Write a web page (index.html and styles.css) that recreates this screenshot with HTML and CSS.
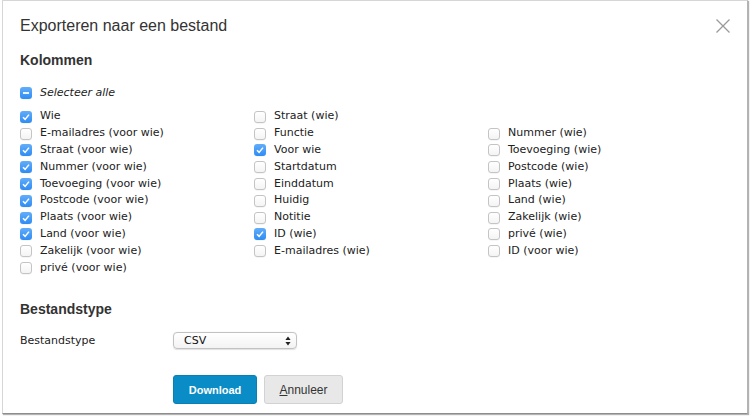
FILE: index.html
```html
<!DOCTYPE html>
<html lang="nl">
<head>
<meta charset="utf-8">
<title>Exporteren naar een bestand</title>
<link rel="stylesheet" href="styles.css">
</head>
<body>
<div class="dialog">
  <div class="header">
    <h1 class="title">Exporteren naar een bestand</h1>
    <span class="close" aria-label="Sluiten">
      <svg width="14" height="14" viewBox="0 0 14 14"><path d="M0.5 0.5 L13.5 13.5 M13.5 0.5 L0.5 13.5" stroke="#9a9a9a" stroke-width="1.3" fill="none"/></svg>
    </span>
  </div>

  <h2 class="section">Kolommen</h2>

  <div class="row selectall">
    <span class="cb on"><svg width="12" height="12" viewBox="0 0 12 12"><path d="M3 6 H9" stroke="#fff" stroke-width="1.8"/></svg></span>
    <span class="lbl italic">Selecteer alle</span>
  </div>

  <div class="grid">
    <div class="col">
      <div class="row"><span class="cb on"><svg width="12" height="12" viewBox="0 0 12 12"><path d="M3 6.3 L5.1 8.4 L9 3.6" stroke="#fff" stroke-width="1.5" fill="none"/></svg></span><span class="lbl">Wie</span></div>
      <div class="row"><span class="cb"></span><span class="lbl">E-mailadres (voor wie)</span></div>
      <div class="row"><span class="cb on"><svg width="12" height="12" viewBox="0 0 12 12"><path d="M3 6.3 L5.1 8.4 L9 3.6" stroke="#fff" stroke-width="1.5" fill="none"/></svg></span><span class="lbl">Straat (voor wie)</span></div>
      <div class="row"><span class="cb on"><svg width="12" height="12" viewBox="0 0 12 12"><path d="M3 6.3 L5.1 8.4 L9 3.6" stroke="#fff" stroke-width="1.5" fill="none"/></svg></span><span class="lbl">Nummer (voor wie)</span></div>
      <div class="row"><span class="cb on"><svg width="12" height="12" viewBox="0 0 12 12"><path d="M3 6.3 L5.1 8.4 L9 3.6" stroke="#fff" stroke-width="1.5" fill="none"/></svg></span><span class="lbl">Toevoeging (voor wie)</span></div>
      <div class="row"><span class="cb on"><svg width="12" height="12" viewBox="0 0 12 12"><path d="M3 6.3 L5.1 8.4 L9 3.6" stroke="#fff" stroke-width="1.5" fill="none"/></svg></span><span class="lbl">Postcode (voor wie)</span></div>
      <div class="row"><span class="cb on"><svg width="12" height="12" viewBox="0 0 12 12"><path d="M3 6.3 L5.1 8.4 L9 3.6" stroke="#fff" stroke-width="1.5" fill="none"/></svg></span><span class="lbl">Plaats (voor wie)</span></div>
      <div class="row"><span class="cb on"><svg width="12" height="12" viewBox="0 0 12 12"><path d="M3 6.3 L5.1 8.4 L9 3.6" stroke="#fff" stroke-width="1.5" fill="none"/></svg></span><span class="lbl">Land (voor wie)</span></div>
      <div class="row"><span class="cb"></span><span class="lbl">Zakelijk (voor wie)</span></div>
      <div class="row"><span class="cb"></span><span class="lbl">privé (voor wie)</span></div>
    </div>
    <div class="col">
      <div class="row"><span class="cb"></span><span class="lbl">Straat (wie)</span></div>
      <div class="row"><span class="cb"></span><span class="lbl">Functie</span></div>
      <div class="row"><span class="cb on"><svg width="12" height="12" viewBox="0 0 12 12"><path d="M3 6.3 L5.1 8.4 L9 3.6" stroke="#fff" stroke-width="1.5" fill="none"/></svg></span><span class="lbl">Voor wie</span></div>
      <div class="row"><span class="cb"></span><span class="lbl">Startdatum</span></div>
      <div class="row"><span class="cb"></span><span class="lbl">Einddatum</span></div>
      <div class="row"><span class="cb"></span><span class="lbl">Huidig</span></div>
      <div class="row"><span class="cb"></span><span class="lbl">Notitie</span></div>
      <div class="row"><span class="cb on"><svg width="12" height="12" viewBox="0 0 12 12"><path d="M3 6.3 L5.1 8.4 L9 3.6" stroke="#fff" stroke-width="1.5" fill="none"/></svg></span><span class="lbl">ID (wie)</span></div>
      <div class="row"><span class="cb"></span><span class="lbl">E-mailadres (wie)</span></div>
    </div>
    <div class="col col-offset">
      <div class="row"><span class="cb"></span><span class="lbl">Nummer (wie)</span></div>
      <div class="row"><span class="cb"></span><span class="lbl">Toevoeging (wie)</span></div>
      <div class="row"><span class="cb"></span><span class="lbl">Postcode (wie)</span></div>
      <div class="row"><span class="cb"></span><span class="lbl">Plaats (wie)</span></div>
      <div class="row"><span class="cb"></span><span class="lbl">Land (wie)</span></div>
      <div class="row"><span class="cb"></span><span class="lbl">Zakelijk (wie)</span></div>
      <div class="row"><span class="cb"></span><span class="lbl">privé (wie)</span></div>
      <div class="row"><span class="cb"></span><span class="lbl">ID (voor wie)</span></div>
    </div>
  </div>

  <h2 class="section section-file">Bestandstype</h2>

  <div class="form-row">
    <span class="form-label">Bestandstype</span>
    <div class="select">
      <span class="select-value">CSV</span>
      <svg class="select-arrows" width="6" height="10" viewBox="0 0 6 10"><path d="M3 0.5 L5.6 4 H0.4 Z M3 9.5 L5.6 6 H0.4 Z" fill="#222"/></svg>
    </div>
  </div>

  <div class="actions">
    <span class="btn btn-primary">Download</span>
    <span class="btn btn-default"><u>A</u>nnuleer</span>
  </div>
</div>
</body>
</html>
```

FILE: styles.css
```css
html, body {
  margin: 0;
  padding: 0;
  background: #ffffff;
}

body {
  width: 750px;
  height: 416px;
  overflow: hidden;
  font-family: "DejaVu Sans", Verdana, sans-serif;
  color: #2b2b2b;
}

.dialog {
  box-sizing: border-box;
  width: 746px;
  height: 414px;
  margin-left: 2px;
  background: #ffffff;
  border: 1px solid #d6d6d6;
  border-right-color: #b4b4b4;
  border-bottom-color: #8e8e8e;
  box-shadow: 1px 1px 1px rgba(0, 0, 0, 0.3);
  padding: 15px 17px 0 17px;
}

.header {
  display: flex;
  align-items: center;
  justify-content: space-between;
  height: 20px;
}

.title {
  margin: 0;
  font-family: "Liberation Sans", Arial, sans-serif;
  font-weight: normal;
  font-size: 16px;
  line-height: 20px;
  color: #333333;
}

.close {
  display: flex;
  width: 14px;
  height: 14px;
}

.section {
  margin: 15px 0 0 0;
  font-family: "Liberation Sans", Arial, sans-serif;
  font-weight: bold;
  font-size: 14px;
  line-height: 18px;
  color: #333333;
}

.section-file {
  margin-top: 24px;
}

.row {
  display: flex;
  align-items: center;
  height: 16.8px;
}

.selectall {
  margin-top: 16px;
}

.lbl {
  font-size: 11px;
  line-height: 16.8px;
  color: #222222;
  white-space: nowrap;
}

.italic {
  font-style: italic;
}

.cb {
  box-sizing: border-box;
  display: flex;
  align-items: center;
  justify-content: center;
  width: 12px;
  height: 12px;
  margin-right: 8px;
  border-radius: 3px;
  border: 1px solid #c4c4c4;
  background: linear-gradient(#ffffff, #f4f4f4);
  box-shadow: 0 0.5px 0.5px rgba(0, 0, 0, 0.08);
}

.cb.on {
  border: none;
  background: linear-gradient(#62adf9, #2e8cf4);
}

.cb svg {
  display: block;
}

.grid {
  display: grid;
  grid-template-columns: repeat(3, 234px);
  margin-top: 6.7px;
}

.col {
  display: flex;
  flex-direction: column;
}

.col-offset {
  padding-top: 16.8px;
}

.form-row {
  display: flex;
  align-items: center;
  margin-top: 14px;
  height: 17px;
}

.form-label {
  width: 153px;
  font-size: 11px;
  color: #222222;
}

.select {
  box-sizing: border-box;
  display: flex;
  align-items: center;
  justify-content: space-between;
  width: 124px;
  height: 17px;
  padding: 0 5px 0 10px;
  border: 1px solid #c2c2c2;
  border-radius: 4px;
  background: linear-gradient(#ffffff, #f3f3f3);
  box-shadow: 0 0.5px 1px rgba(0, 0, 0, 0.12);
}

.select-value {
  font-size: 11px;
  color: #111111;
}

.select-arrows {
  display: block;
}

.actions {
  display: flex;
  gap: 7px;
  margin-top: 26px;
  margin-left: 153px;
}

.btn {
  box-sizing: border-box;
  display: flex;
  align-items: center;
  justify-content: center;
  height: 29px;
  border-radius: 3px;
  font-family: "Liberation Sans", Arial, sans-serif;
}

.btn-primary {
  width: 84px;
  background: #0a8cc6;
  border: 1px solid #0880b6;
  color: #ffffff;
  font-weight: bold;
  font-size: 11px;
}

.btn-default {
  width: 79px;
  background: #e8e8e8;
  border: 1px solid #d2d2d2;
  color: #333333;
  font-size: 12px;
}

.btn-default u {
  text-decoration: underline;
}
```
